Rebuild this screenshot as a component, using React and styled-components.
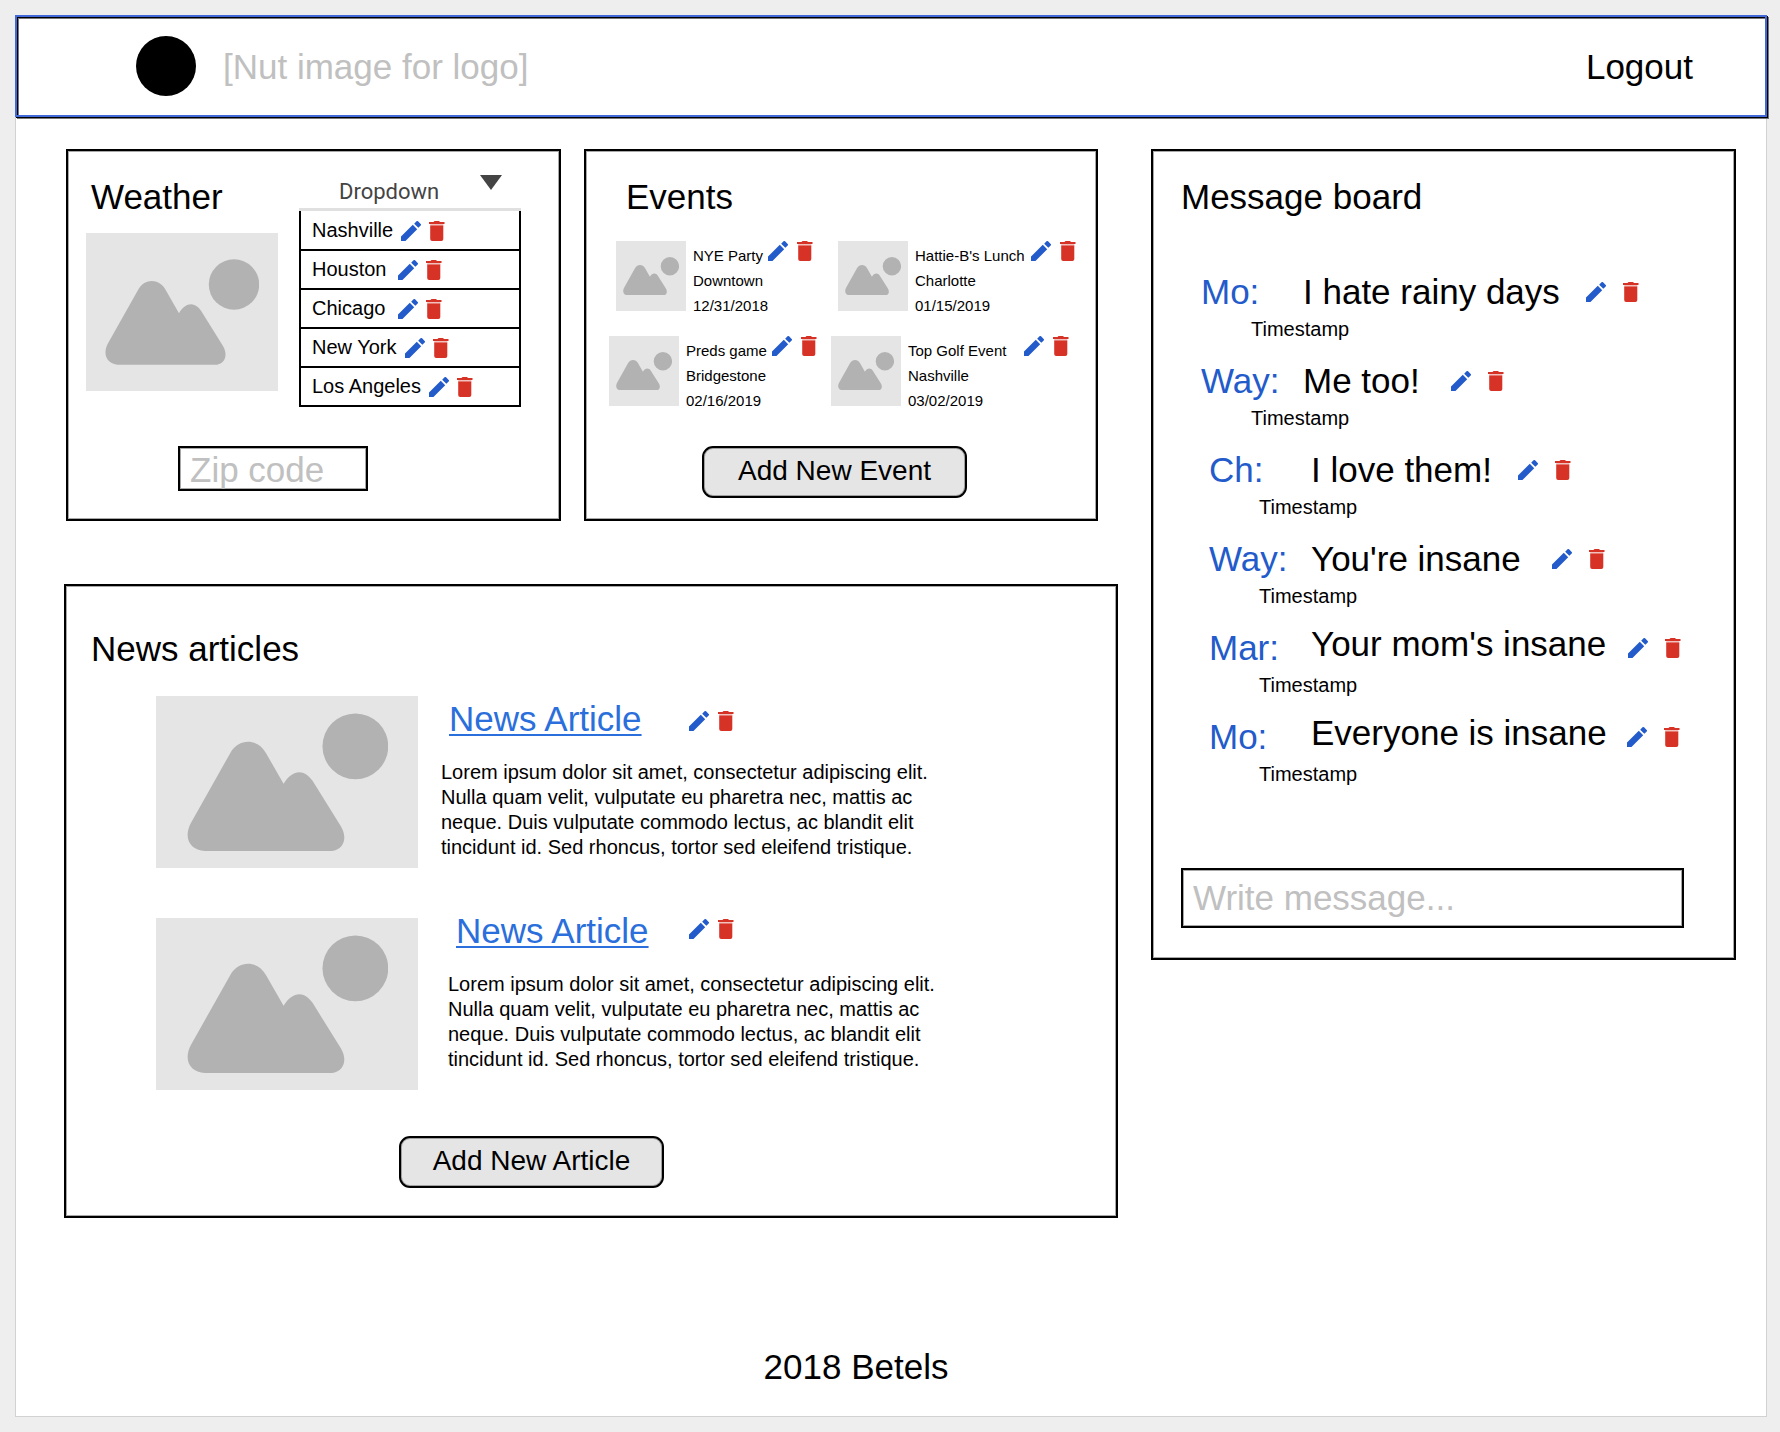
import React from "react";
import styled, { createGlobalStyle } from "styled-components";

const GlobalStyle = createGlobalStyle`
  *, *::before, *::after { box-sizing: border-box; }
  body {
    margin: 0;
    background: #eeeeee;
    color: #000;
    font-family: "Liberation Sans", Helvetica, Arial, sans-serif;
    font-size: 20px;
    line-height: 25px;
  }
  h1, h2, h3, p, ul { margin: 0; padding: 0; font-weight: 400; }
  ul { list-style: none; }
  button, input, select { font: inherit; color: inherit; }
`;

const BLUE = "#235bcb";
const RED = "#d63226";

/* ---------- page frame ---------- */

const Page = styled.div`
  padding: 15px 13px 15px 15px;
`;

const Header = styled.header`
  display: flex;
  align-items: center;
  height: 102px;
  padding: 0 72px 0 119px;
  background: #fff;
  border: 2px solid #4169d8;
  box-shadow: 1px 1px 0 #000, 2px 2px 0 #777, inset 1px 1px 0 #000, inset 2px 2px 0 #777;
  position: relative;
`;

const Logo = styled.span`
  width: 60px;
  height: 60px;
  border-radius: 50%;
  background: #000;
`;

const LogoText = styled.h1`
  margin-left: 27px;
  padding-top: 2px;
  font-size: 35px;
  line-height: 40px;
  color: #c0c0c0;
`;

const LogoutButton = styled.button`
  margin-left: auto;
  padding: 2px 0 0;
  border: 0;
  background: none;
  font-size: 35px;
  line-height: 40px;
  cursor: pointer;
`;

const Sheet = styled.div`
  background: #fff;
  border: 1px solid #d2d2d2;
  border-top: 0;
`;

const Main = styled.main`
  display: grid;
  grid-template-columns: 1054fr 585fr;
  align-items: start;
  gap: 33px;
  padding: 32px 30px 0 48px;
`;

const LeftColumn = styled.div`
  display: grid;
  gap: 63px;
`;

const TopRow = styled.div`
  display: grid;
  grid-template-columns: 495fr 514fr;
  gap: 23px;
  padding: 0 20px 0 2px;
`;

const Footer = styled.footer`
  padding: 129px 70px 29px 0;
  text-align: center;
  font-size: 35px;
  line-height: 40px;
`;

/* ---------- shared parts ---------- */

const Card = styled.section`
  border: 2px solid #000;
  box-shadow: inset 0 0 0 1px #a8a8a8;
  padding: ${(p) => p.$pad};
`;

const Title = styled.h2`
  padding-left: ${(p) => p.$indent || 0}px;
  font-size: 35px;
  line-height: 40px;
`;

const TextField = styled.input`
  display: block;
  border: 2px solid #000;
  border-radius: 0;
  outline: 0;
  background: #fff;
  box-shadow: inset 0 0 0 1px #a8a8a8;
  font-size: 35px;
  padding: 0 10px;
  &::placeholder { color: #c0c0c0; opacity: 1; }
`;

const AddButton = styled.button`
  display: block;
  width: 265px;
  height: 52px;
  margin: ${(p) => p.$top}px 0 0 ${(p) => p.$left}px;
  padding: 0 0 3px;
  border: 2px solid #000;
  border-radius: 11px;
  background: #e5e5e5;
  box-shadow: inset 0 0 0 1px #a0a0a0;
  font-size: 28px;
  cursor: pointer;
`;

const ActionGroup = styled.span`
  display: flex;
  flex: none;
  gap: ${(p) => p.$gap}px;
`;

const IconButton = styled.button`
  display: block;
  padding: 0;
  border: 0;
  background: none;
  cursor: pointer;
  svg { display: block; }
`;

function Actions({ gap = 8, name }) {
  return (
    <ActionGroup $gap={gap}>
      <IconButton type="button" aria-label={`Edit ${name}`}>
        <svg width="20" height="20" viewBox="3 3 18 18" fill={BLUE}>
          <path d="M3 17V21h4L17.6 10.4l-4-4L3 17zM20.71 7.04a.996.996 0 0 0 0-1.41l-2.34-2.34a.996.996 0 0 0-1.41 0l-2.1 2.1 3.75 3.75 2.1-2.1z" />
        </svg>
      </IconButton>
      <IconButton type="button" aria-label={`Delete ${name}`}>
        <svg width="16" height="20" viewBox="0 0 16 20" fill={RED}>
          <path d="M0 1H4.5L5.5 0H10L11 1H15.5V3H0Z" />
          <path d="M1.2 3H14.3V5H1.2Z" opacity="0.3" />
          <path d="M1.2 4.6H14.3V18Q14.3 20 12.3 20H3.2Q1.2 20 1.2 18Z" />
        </svg>
      </IconButton>
    </ActionGroup>
  );
}

const PictureBox = styled.div`
  display: flex;
  flex: none;
  align-items: center;
  justify-content: center;
  width: ${(p) => p.$w}px;
  height: ${(p) => p.$h}px;
  background: #e5e5e5;
`;

function Picture({ w, h, art }) {
  return (
    <PictureBox $w={w} $h={h}>
      <svg width={art} viewBox="0 0 154 106" fill="#b2b2b2" aria-hidden="true">
        <circle cx="129" cy="25.5" r="25.2" />
        <path d="M3.3 83.7L33.3 30.4C39.8 19.2 54.2 19.2 60.7 31L74 54.3C80.5 43 90 42.5 96.2 52L118 87C123.8 97 119 105.8 109.8 105.8H15.6C2.5 105.8-3.5 96 3.3 83.7Z" />
      </svg>
    </PictureBox>
  );
}

/* ---------- weather ---------- */

const WeatherTop = styled.div`
  display: flex;
  gap: 21px;
`;

const WeatherLeft = styled.div`
  display: grid;
  align-content: start;
  gap: 16px;
  padding-top: 26px;
`;

const CityPanel = styled.div`
  width: 222px;
  padding-top: 19px;
`;

const DropdownBox = styled.div`
  display: grid;
  border-bottom: 3px solid #e0e0e0;
  svg {
    grid-area: 1 / 1;
    justify-self: end;
    margin: 5px 19px 0 0;
    pointer-events: none;
  }
`;

const Dropdown = styled.select`
  grid-area: 1 / 1;
  appearance: none;
  width: 100%;
  height: 38px;
  padding: 5px 40px 0;
  border: 0;
  border-radius: 0;
  outline: 0;
  background: none;
  color: #444;
  font-family: Roboto, sans-serif;
  font-size: 22px;
`;

const CityList = styled.ul`
  width: 222px;
  padding-top: 1px;
  border: solid #000;
  border-width: 0 2px;
`;

const City = styled.li`
  display: flex;
  align-items: center;
  gap: 8px;
  height: 39px;
  padding-left: 11px;
  border-bottom: 2px solid #000;
`;

const CityName = styled.span`
  min-width: 78px;
`;

const ZipField = styled(TextField)`
  width: 190px;
  height: 45px;
  margin: 39px 0 0 92px;
  padding-top: 3px;
`;

const cities = ["Nashville", "Houston", "Chicago", "New York", "Los Angeles"];

function Weather() {
  return (
    <Card $pad="0 0 28px 18px">
      <WeatherTop>
        <WeatherLeft>
          <Title $indent={5}>Weather</Title>
          <Picture w={192} h={158} art={154} />
        </WeatherLeft>
        <CityPanel>
          <DropdownBox>
            <Dropdown aria-label="City" defaultValue="Dropdown">
              <option>Dropdown</option>
            </Dropdown>
            <svg width="22" height="15" viewBox="0 0 22 15" aria-hidden="true">
              <path d="M0 0H22L11 15Z" fill="#444" />
            </svg>
          </DropdownBox>
          <CityList>
            {cities.map((city) => (
              <City key={city}>
                <CityName>{city}</CityName>
                <Actions name={city} />
              </City>
            ))}
          </CityList>
        </CityPanel>
      </WeatherTop>
      <ZipField type="text" aria-label="Zip code" placeholder="Zip code" />
    </Card>
  );
}

/* ---------- events ---------- */

const EventRows = styled.div`
  display: grid;
  gap: 18px;
  margin-top: 24px;
`;

const EventRow = styled.div`
  display: grid;
  grid-template-columns: 222px 1fr;
  padding-left: ${(p) => p.$indent}px;
`;

const EventItem = styled.article`
  display: flex;
  gap: 7px;
  font-size: 15px;
  white-space: nowrap;
`;

const EventHead = styled.div`
  display: flex;
  align-items: flex-start;
  gap: 5px;
`;

const EventName = styled.h3`
  min-width: ${(p) => p.$min}px;
  padding-top: 2px;
  font-size: 15px;
`;

const eventRows = [
  {
    indent: 30,
    items: [
      { name: "NYE Party", place: "Downtown", date: "12/31/2018" },
      { name: "Hattie-B's Lunch", place: "Charlotte", date: "01/15/2019" },
    ],
  },
  {
    indent: 23,
    items: [
      { name: "Preds game", place: "Bridgestone", date: "02/16/2019" },
      { name: "Top Golf Event", place: "Nashville", date: "03/02/2019" },
    ],
  },
];

function Events() {
  return (
    <Card $pad="26px 0 21px">
      <Title $indent={40}>Events</Title>
      <EventRows>
        {eventRows.map((row) => (
          <EventRow key={row.indent} $indent={row.indent}>
            {row.items.map((item, column) => (
              <EventItem key={item.name}>
                <Picture w={70} h={70} art={56} />
                <div>
                  <EventHead>
                    <EventName $min={column === 1 ? 111 : 0}>{item.name}</EventName>
                    <Actions gap={9} name={item.name} />
                  </EventHead>
                  <p>{item.place}</p>
                  <p>{item.date}</p>
                </div>
              </EventItem>
            ))}
          </EventRow>
        ))}
      </EventRows>
      <AddButton type="button" $top={33} $left={116}>Add New Event</AddButton>
    </Card>
  );
}

/* ---------- news ---------- */

const Articles = styled.div`
  display: grid;
  gap: 43px;
  margin: 27px 0 0 65px;
`;

const Article = styled.article`
  display: flex;
  align-items: flex-end;
`;

const ArticleText = styled.div`
  flex: 0 1 auto;
  max-width: 540px;
  padding: 0 0 ${(p) => p.$bottom}px ${(p) => p.$indent}px;
`;

const ArticleHead = styled.div`
  display: flex;
  align-items: ${(p) => p.$align};
  gap: ${(p) => 70 - p.$indent}px;
  height: 40px;
  margin: 0 0 21px 8px;
`;

const HeadActions = styled.div`
  padding: 8px 0;
`;

const ArticleLink = styled.a`
  color: #2a6fdb;
  font-size: 35px;
  line-height: 40px;
  text-decoration: underline;
  text-decoration-thickness: 2px;
  text-underline-offset: 3px;
  text-decoration-skip-ink: none;
`;

const ArticleBody = styled.p`
  max-width: 500px;
`;

const articles = [
  { id: 1, indent: 23, bottom: 8, align: "flex-end" },
  { id: 2, indent: 30, bottom: 18, align: "flex-start" },
];

function News() {
  return (
    <Card $pad="43px 24px 28px 25px">
      <Title>News articles</Title>
      <Articles>
        {articles.map((a) => (
          <Article key={a.id}>
            <Picture w={262} h={172} art={201} />
            <ArticleText $bottom={a.bottom} $indent={a.indent}>
              <ArticleHead $align={a.align} $indent={a.indent}>
                <ArticleLink href="#">News Article</ArticleLink>
                <HeadActions>
                  <Actions gap={9} name={`article ${a.id}`} />
                </HeadActions>
              </ArticleHead>
              <ArticleBody>
                Lorem ipsum dolor sit amet, consectetur adipiscing elit. Nulla quam velit, vulputate eu
                pharetra nec, mattis ac neque. Duis vulputate commodo lectus, ac blandit elit tincidunt
                id. Sed rhoncus, tortor sed eleifend tristique.
              </ArticleBody>
            </ArticleText>
          </Article>
        ))}
      </Articles>
      <AddButton type="button" $top={46} $left={308}>Add New Article</AddButton>
    </Card>
  );
}

/* ---------- message board ---------- */

const Messages = styled.ul`
  display: grid;
  gap: 19px;
  margin: 55px 0 81px 20px;
`;

const Message = styled.li`
  padding-left: ${(p) => p.$indent}px;
`;

const MessageLine = styled.div`
  display: flex;
  align-items: center;
  height: 40px;
  font-size: 35px;
  line-height: 40px;
  white-space: nowrap;
`;

const Author = styled.span`
  flex: none;
  width: 102px;
  color: ${BLUE};
`;

const MessageText = styled.p`
  align-self: flex-start;
  margin-right: ${(p) => p.$gap}px;
  line-height: ${(p) => (p.$raised ? 32 : 40)}px;
`;

const Timestamp = styled.p`
  margin-top: 5px;
  padding-left: 50px;
`;

const MessageField = styled(TextField)`
  width: calc(100% - 22px);
  height: 60px;
`;

const messages = [
  { author: "Mo:", text: "I hate rainy days", indent: 0, gap: 26 },
  { author: "Way:", text: "Me too!", indent: 0, gap: 31 },
  { author: "Ch:", text: "I love them!", indent: 8, gap: 26 },
  { author: "Way:", text: "You're insane", indent: 8, gap: 31 },
  { author: "Mar:", text: "Your mom's insane", indent: 8, gap: 22, raised: true },
  { author: "Mo:", text: "Everyone is insane", indent: 8, gap: 20, raised: true },
];

function MessageBoard() {
  return (
    <Card $pad="26px 28px 30px">
      <Title>Message board</Title>
      <Messages>
        {messages.map((m) => (
          <Message key={m.text} $indent={m.indent}>
            <MessageLine>
              <Author>{m.author}</Author>
              <MessageText $gap={m.gap} $raised={m.raised}>{m.text}</MessageText>
              <Actions gap={17} name="message" />
            </MessageLine>
            <Timestamp>Timestamp</Timestamp>
          </Message>
        ))}
      </Messages>
      <MessageField type="text" aria-label="Write message" placeholder="Write message..." />
    </Card>
  );
}

export default function App() {
  return (
    <Page>
      <GlobalStyle />
      <Header>
        <Logo />
        <LogoText>[Nut image for logo]</LogoText>
        <LogoutButton type="button">Logout</LogoutButton>
      </Header>
      <Sheet>
        <Main>
          <LeftColumn>
            <TopRow>
              <Weather />
              <Events />
            </TopRow>
            <News />
          </LeftColumn>
          <MessageBoard />
        </Main>
        <Footer>2018 Betels</Footer>
      </Sheet>
    </Page>
  );
}
